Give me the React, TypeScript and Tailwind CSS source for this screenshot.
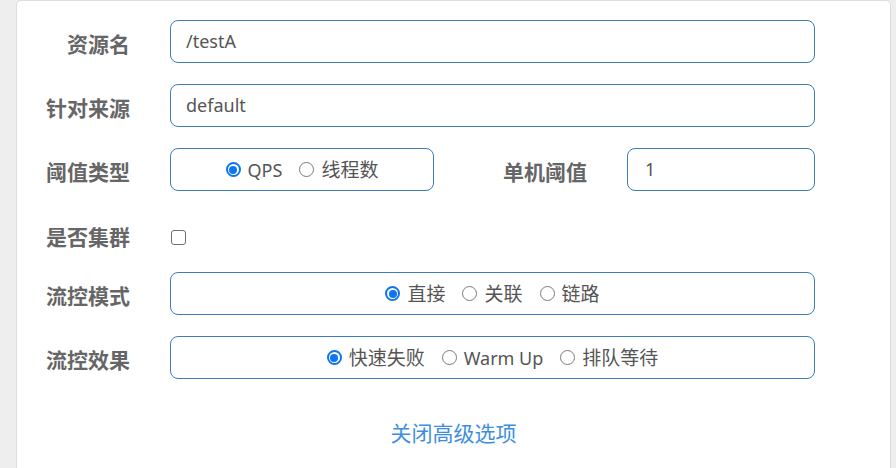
import React from "react";

const font = { fontFamily: '"Noto Sans", "Noto Sans CJK SC", sans-serif' };

function Radio({ label, checked, cjk }: { label: string; checked?: boolean; cjk?: boolean }) {
  return (
    <label className="flex items-center gap-[7px]">
      {checked ? (
        <span className="shrink-0 w-[15px] h-[15px] rounded-full border-[2px] border-[#0f75ef] bg-white flex items-center justify-center">
          <span className="w-[8px] h-[8px] rounded-full bg-[#0f75ef]" />
        </span>
      ) : (
        <span className="shrink-0 w-[15px] h-[15px] rounded-full border border-[#7a7a7a] bg-white" />
      )}
      <span className={`pt-[2px] ${cjk ? "text-[19px]" : "text-[18px]"}`}>{label}</span>
    </label>
  );
}

function Label({ children, plain }: { children: React.ReactNode; plain?: boolean }) {
  return (
    <div
      className={`w-[113px] shrink-0 text-right text-[21px] font-bold text-[#666] leading-none ${plain ? "" : "pt-[6px]"}`}
    >
      {children}
    </div>
  );
}

const boxCls =
  "h-[43px] rounded-[8px] border border-[#3d7cc0] bg-white flex items-center text-[18px] text-[#555]";

export default function App() {
  return (
    <div style={font} className="w-[896px] h-[468px] overflow-hidden bg-[#eeeeee] pl-[16px] pr-[5px]">
      <div className="h-[480px] bg-white border border-[#dddddd] rounded-t-[5px] pt-[19px]">
        <div className="flex items-center">
          <Label>资源名</Label>
          <div className={`${boxCls} ml-[40px] w-[645px] pl-[15px]`}>/testA</div>
        </div>
        <div className="flex items-center mt-[21px]">
          <Label>针对来源</Label>
          <div className={`${boxCls} ml-[40px] w-[645px] pl-[15px]`}>default</div>
        </div>
        <div className="flex items-center mt-[21px]">
          <Label>阈值类型</Label>
          <div className={`${boxCls} ml-[40px] w-[264px] justify-center gap-[17px]`}>
            <Radio label="QPS" checked />
            <Radio label="线程数" cjk />
          </div>
          <div className="w-[153px] shrink-0 text-right text-[21px] font-bold text-[#666] leading-none pt-[6px]">
            单机阈值
          </div>
          <div className={`${boxCls} ml-[40px] w-[188px] pl-[17px]`}>1</div>
        </div>
        <div className="flex items-center mt-[26px] h-[40px]">
          <Label plain>是否集群</Label>
          <span className="shrink-0 ml-[41px] w-[15px] h-[15px] rounded-[3px] border border-[#6f6f6f] bg-white" />
        </div>
        <div className="flex items-center mt-[15px]">
          <Label>流控模式</Label>
          <div className={`${boxCls} ml-[40px] w-[645px] justify-center gap-[17px]`}>
            <Radio label="直接" checked cjk />
            <Radio label="关联" cjk />
            <Radio label="链路" cjk />
          </div>
        </div>
        <div className="flex items-center mt-[21px]">
          <Label>流控效果</Label>
          <div className={`${boxCls} ml-[40px] w-[645px] justify-center gap-[17px]`}>
            <Radio label="快速失败" checked cjk />
            <Radio label="Warm Up" />
            <Radio label="排队等待" cjk />
          </div>
        </div>
        <div className="mt-[44px] flex justify-center">
          <a className="text-[21px] text-[#3d8ede] leading-none cursor-pointer">关闭高级选项</a>
        </div>
      </div>
    </div>
  );
}
